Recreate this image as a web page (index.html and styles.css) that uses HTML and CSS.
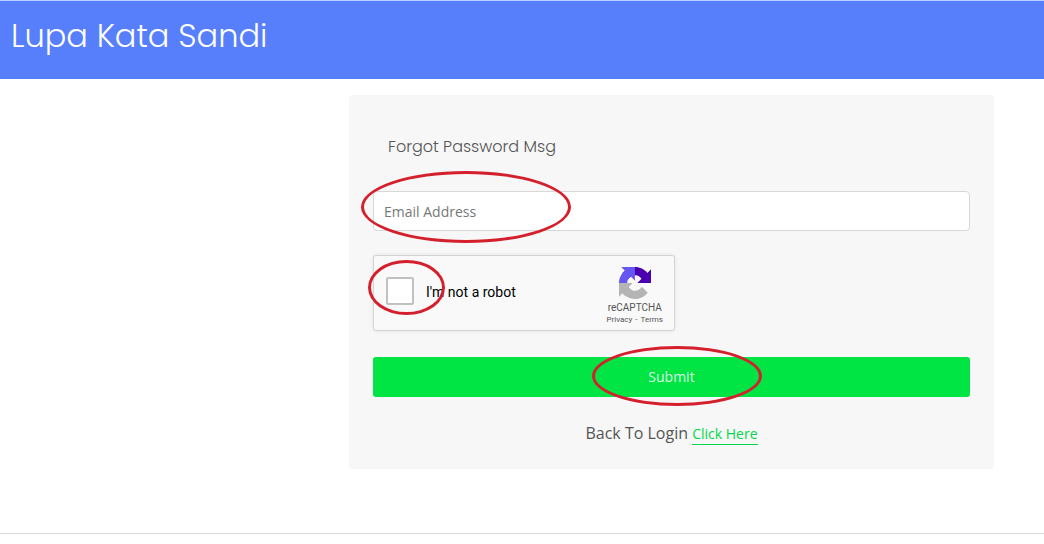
FILE: index.html
```html
<!DOCTYPE html>
<html lang="id">
<head>
<meta charset="utf-8">
<meta name="viewport" content="width=device-width, initial-scale=1">
<title>Lupa Kata Sandi</title>
<link rel="stylesheet" href="styles.css">
</head>
<body>
<header class="banner">
  <h1 class="banner-title">Lupa Kata Sandi</h1>
</header>
<main class="content">
  <form class="card">
    <h2 class="card-title">Forgot Password Msg</h2>
    <div class="field marked">
      <input class="text-input" type="email" placeholder="Email Address" aria-label="Email Address">
      <span class="ring ring-email"></span>
    </div>
    <div class="captcha marked">
      <input class="captcha-check" type="checkbox" id="robot">
      <label class="captcha-label" for="robot">I'm not a robot</label>
      <div class="captcha-brand">
        <svg class="captcha-logo" viewBox="0 0 64 64" aria-hidden="true">
          <path fill="#4a00b0" d="M64 31.955l-.033-1.37V4.687l-7.16 7.16C50.948 4.674 42.033.093 32.05.093c-10.4 0-19.622 4.96-25.458 12.64l11.736 11.86a15.55 15.55 0 0 1 4.754-5.334c2.05-1.6 4.952-2.906 8.968-2.906.485 0 .86.057 1.135.163 4.976.393 9.288 3.14 11.828 7.124l-8.307 8.307L64 31.953"/>
          <path fill="#6757f2" d="M31.862.094l-1.37.033H4.594l7.16 7.16C4.58 13.147 0 22.06 0 32.046c0 10.4 4.96 19.622 12.64 25.458L24.5 45.768a15.55 15.55 0 0 1-5.334-4.754c-1.6-2.05-2.906-4.952-2.906-8.968 0-.485.057-.86.163-1.135.393-4.976 3.14-9.288 7.124-11.828l8.307 8.307L31.86.095"/>
          <path fill="#b4b4b4" d="M.001 32.045l.033 1.37v25.898l7.16-7.16c5.86 7.173 14.774 11.754 24.76 11.754 10.4 0 19.622-4.96 25.458-12.64l-11.736-11.86a15.55 15.55 0 0 1-4.754 5.334c-2.05 1.6-4.952 2.906-8.968 2.906-.485 0-.86-.057-1.135-.163-4.976-.393-9.288-3.14-11.828-7.124l8.307-8.307c-10.522.04-22.4.066-27.295-.005"/>
        </svg>
        <span class="captcha-name">reCAPTCHA</span>
        <span class="captcha-links"><a href="#">Privacy</a><span>-</span><a href="#">Terms</a></span>
      </div>
      <span class="ring ring-check"></span>
    </div>
    <div class="marked">
      <button class="submit" type="submit">Submit</button>
      <span class="ring ring-submit"></span>
    </div>
    <p class="back">Back To Login <a class="back-link" href="#">Click Here</a></p>
  </form>
</main>
<footer class="footer"></footer>
</body>
</html>
```

FILE: styles.css
```css
*, *::before, *::after { box-sizing: border-box; }

body {
  margin: 0;
  background: #fff;
  color: #555;
  font-family: "Open Sans", sans-serif;
}

.banner {
  padding: 11px 11px 19px;
  border-top: 1px solid #b9d3ff;
  background: #577ffb;
  color: #fff;
}

.banner-title {
  margin: 0;
  font-family: Poppins, Inter, sans-serif;
  font-size: 32px;
  font-weight: 300;
  line-height: 48px;
}

.content {
  display: grid;
  grid-template-columns: 349fr 645fr;
  padding: 16px 50px 64px 0;
}

.card {
  grid-column: 2;
  padding: 40px 24px 23px;
  border-radius: 4px;
  background: #f7f7f7;
}

.card-title {
  margin: 0 15px 32px;
  font-family: Poppins, Inter, sans-serif;
  font-size: 16px;
  font-weight: 300;
  line-height: 24px;
}

.marked { position: relative; }

.text-input {
  display: block;
  width: 100%;
  height: 40px;
  padding: 0 10px;
  border: 1px solid #d8d8d8;
  border-radius: 4px;
  background: #fff;
  font: 14px "Open Sans", sans-serif;
}

.text-input::placeholder { color: #777; opacity: 1; }

.captcha {
  display: flex;
  align-items: flex-start;
  max-width: 302px;
  height: 76px;
  margin: 24px 0 26px;
  padding: 0 11px 0 12px;
  border: 1px solid #d3d3d3;
  border-radius: 3px;
  background: #f9f9f9;
  box-shadow: 0 0 4px rgba(0, 0, 0, 0.08);
  font-family: Roboto, sans-serif;
}

.captcha-check {
  appearance: none;
  flex: none;
  width: 28px;
  height: 28px;
  margin: 21px 12px 0 0;
  border: 2px solid #c1c1c1;
  border-radius: 2px;
  background: #fff;
}

.captcha-label {
  flex: 1;
  padding-top: 21px;
  color: #000;
  font-size: 14px;
  line-height: 30px;
}

.captcha-brand {
  display: flex;
  flex-direction: column;
  align-items: center;
  padding-top: 11px;
  color: #555;
}

.captcha-logo { width: 32px; height: 32px; }

.captcha-name {
  margin-top: 2px;
  font-size: 10px;
  line-height: 14px;
}

.captcha-links {
  display: flex;
  gap: 3px;
  font-size: 8px;
  line-height: 10px;
}

.captcha-links a { color: inherit; text-decoration: none; }

.submit {
  display: block;
  width: 100%;
  height: 40px;
  padding: 0 0 2px;
  border: 0;
  border-radius: 3px;
  background: #00e444;
  color: #d8fbe2;
  font: 14px "Open Sans", sans-serif;
}

.back {
  margin: 24px 0 0;
  font-size: 16px;
  line-height: 24px;
  text-align: center;
}

.back-link {
  padding-bottom: 1px;
  border-bottom: 1px solid #00d84a;
  color: #00d84a;
  font-size: 14px;
  text-decoration: none;
}

.ring {
  position: absolute;
  border: 3px solid #d4202c;
  border-radius: 50%;
  pointer-events: none;
}

.ring-email { top: -20px; left: -12px; width: 210px; height: 72px; }
.ring-check { top: 4px; left: -6px; width: 77px; height: 55px; }
.ring-submit { top: -11px; left: calc(50% - 80px); width: 170px; height: 60px; }

.footer { border-top: 1px solid #d9d9d9; }
```
